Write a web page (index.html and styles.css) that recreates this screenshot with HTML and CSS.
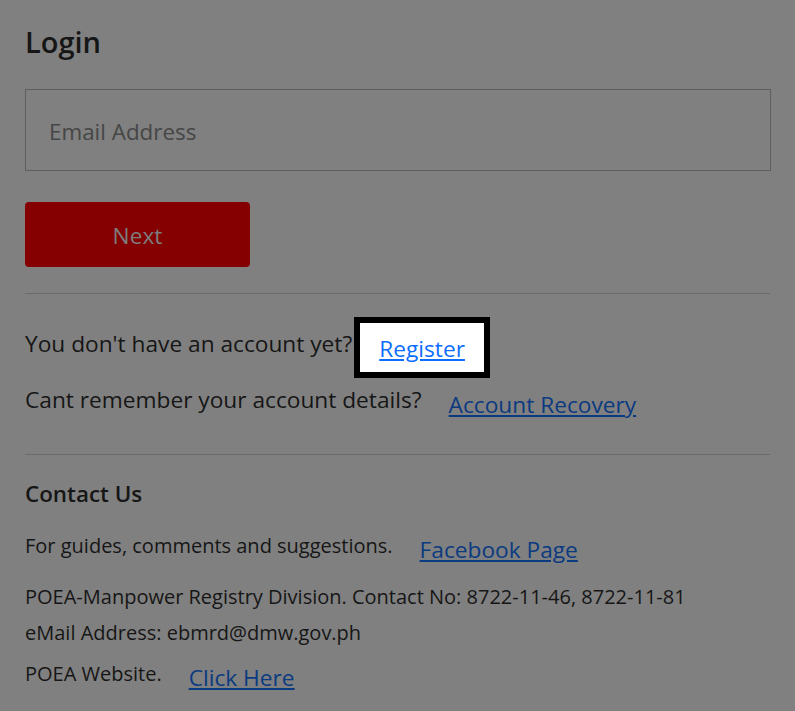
FILE: index.html
```html
<!DOCTYPE html>
<html lang="en">
<head>
    <meta charset="UTF-8">
    <title>Login</title>
    <link rel="stylesheet" href="styles.css">
</head>
<body>
    <div class="page">
        <h4 class="title">Login</h4>
        <input type="text" class="email" placeholder="Email Address">
        <button class="btn-next">Next</button>
        <hr class="line">
        <div class="row">
            <span class="row-text">You don't have an account yet?</span>
            <a href="javascript:;" class="row-link spot">Register</a>
        </div>
        <div class="row">
            <span class="row-text">Cant remember your account details?</span>
            <a href="javascript:;" class="row-link">Account Recovery</a>
        </div>
        <hr class="line">
        <h5 class="contact-title">Contact Us</h5>
        <div class="row">
            <span class="row-text small">For guides, comments and suggestions.</span>
            <a href="javascript:;" class="row-link">Facebook Page</a>
        </div>
        <p class="info">
            POEA-Manpower Registry Division. Contact No: 8722-11-46, 8722-11-81<br>
            eMail Address: ebmrd@dmw.gov.ph
        </p>
        <div class="row">
            <span class="row-text small">POEA Website.</span>
            <a href="javascript:;" class="row-link">Click Here</a>
        </div>
    </div>
</body>
</html>
```

FILE: styles.css
```css
* {
    margin: 0;
    padding: 0;
    box-sizing: border-box;
}
body{
    background: #808080;
    font-family: "Open Sans", "Noto Sans", sans-serif;
    color: #161616;
}
.page{
    padding: 25px 24px 0 25px;
    display: flex;
    flex-direction: column;
}
.title{
    font-size: 29px;
    font-weight: 600;
    line-height: 34px;
}
.email{
    margin-top: 30px;
    height: 82px;
    width: 100%;
    border: 1px solid #5e5e5e;
    background: transparent;
    padding: 2px 23px 0 23px;
    font-family: inherit;
    font-size: 22.4px;
    color: #161616;
    outline: none;
}
.email::placeholder{
    color: #464646;
}
.btn-next{
    margin-top: 31px;
    width: 225px;
    height: 65px;
    border: none;
    border-radius: 4px;
    background: #850000;
    color: #7d7d7d;
    font-family: inherit;
    font-size: 22.7px;
    padding-top: 2px;
}
.line{
    border: none;
    border-top: 1px solid #6a6a6a;
    margin-top: 26px;
    margin-right: 1px;
}
.line + .row{
    margin-top: 29px;
}
.row + .row{
    margin-top: 7px;
}
.row{
    display: flex;
    align-items: flex-start;
    height: 49px;
}
.row-text{
    font-size: 22.7px;
    line-height: 34px;
    padding-top: 4px;
}
.row-text.small{
    font-size: 20px;
    padding-top: 5px;
}
.row-link{
    margin-left: 8px;
    padding: 9px 19px 6px 19px;
    font-size: 22.7px;
    line-height: 34px;
    color: #0a3a80;
    text-decoration: underline;
}
.row-link.spot{
    background: #fff;
    color: #0d6efd;
    outline: 6px solid #000;
}
.contact-title{
    margin-top: 24px;
    font-size: 22.4px;
    font-weight: 600;
    line-height: 30px;
}
.contact-title + .row{
    margin-top: 15px;
}
.info{
    margin-top: 6px;
    font-size: 20px;
    line-height: 36px;
}
.info + .row{
    margin-top: 1px;
}
```
